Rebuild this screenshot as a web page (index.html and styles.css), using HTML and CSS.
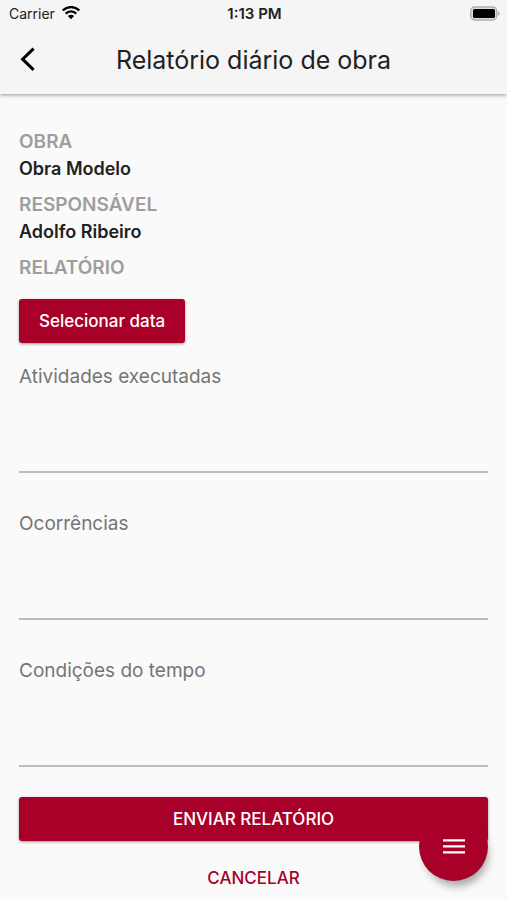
FILE: index.html
```html
<!DOCTYPE html>
<html lang="pt-BR">
<head>
<meta charset="utf-8">
<meta name="viewport" content="width=device-width, initial-scale=1">
<title>Relatório diário de obra</title>
<link rel="stylesheet" href="styles.css">
</head>
<body>
<header class="header">
  <div class="status">
    <span class="carrier">Carrier
      <svg width="18" height="14" viewBox="0 0 18 14" aria-hidden="true">
        <path d="M.8 4.5a11.6 11.6 0 0 1 16.4 0M3.7 7.6a7.5 7.5 0 0 1 10.6 0" fill="none" stroke="#000" stroke-width="2.4"/>
        <path d="M9 13.2 5.9 10.1a4.4 4.4 0 0 1 6.2 0z"/>
      </svg>
    </span>
    <span class="time">1:13 PM</span>
    <svg class="battery" width="31" height="15" viewBox="0 0 31 15" aria-hidden="true">
      <rect x="1.7" y="1" width="26" height="13" rx="4" fill="#ddd" stroke="#b0b0b0" stroke-width="1.4"/>
      <rect x="4" y="3" width="22" height="9" rx="1.6"/>
      <path d="M28.8 5.2q2 .6 2 2.3t-2 2.3z" fill="#b0b0b0"/>
    </svg>
  </div>
  <div class="appbar">
    <button class="back" type="button" aria-label="Voltar">
      <svg width="16" height="26" viewBox="0 0 16 26" aria-hidden="true">
        <path d="M13.6 1.6 2.6 12.2l11 10.6" fill="none" stroke="#000" stroke-width="3"/>
      </svg>
    </button>
    <h1 class="title">Relatório diário de obra</h1>
  </div>
</header>
<main>
  <form class="form">
    <dl class="details">
      <dt>OBRA</dt>
      <dd>Obra Modelo</dd>
      <dt>RESPONSÁVEL</dt>
      <dd>Adolfo Ribeiro</dd>
    </dl>
    <h2 class="section">RELATÓRIO</h2>
    <button class="button date" type="button">Selecionar data</button>
    <div class="field">
      <label for="atividades">Atividades executadas</label>
      <textarea id="atividades"></textarea>
    </div>
    <div class="field">
      <label for="ocorrencias">Ocorrências</label>
      <textarea id="ocorrencias"></textarea>
    </div>
    <div class="field">
      <label for="tempo">Condições do tempo</label>
      <textarea id="tempo"></textarea>
    </div>
    <button class="button" type="button">ENVIAR RELATÓRIO</button>
    <button class="cancel" type="button">CANCELAR</button>
  </form>
</main>
<button class="fab" type="button" aria-label="Menu">
  <svg width="24" height="18" viewBox="0 0 24 18" aria-hidden="true">
    <path d="M1 2.4h22M1 8.4h22M1 14.4h22" stroke="#fff" stroke-width="2.4"/>
  </svg>
</button>
</body>
</html>
```
FILE: styles.css
```css
* {
  box-sizing: border-box;
}

body {
  margin: 0;
  background: #fafafa;
  color: #212121;
  font-family: Inter, Roboto, sans-serif;
}

button {
  padding: 0;
  border: 0;
  background: none;
  font: inherit;
  cursor: pointer;
}

.header {
  background: #f5f5f5;
  box-shadow: 0 1px 4px rgba(0, 0, 0, 0.4);
}

.status {
  display: grid;
  grid-template-columns: 1fr auto 1fr;
  align-items: center;
  height: 26px;
  padding: 0 7px 0 9px;
  font-size: 14px;
}

.carrier {
  display: flex;
  align-items: center;
  gap: 7px;
}

.time {
  font-size: 15px;
  font-weight: 600;
}

.battery {
  justify-self: end;
}

.appbar {
  display: grid;
  grid-template-columns: 56px 1fr 56px;
  align-items: center;
  height: 68px;
}

.back {
  display: flex;
  align-items: center;
  justify-content: center;
  height: 56px;
}

.title {
  margin: 0;
  font-size: 25px;
  font-weight: 400;
  line-height: 32px;
  text-align: center;
}

.form {
  display: flex;
  flex-direction: column;
  padding: 34px 19px 0;
}

.details {
  margin: 0;
}

.details dt,
.section {
  margin: 0;
  color: #9e9e9e;
  font-size: 19px;
  font-weight: 600;
  line-height: 27px;
}

.details dd {
  margin: 0 0 9px;
  font-size: 18px;
  font-weight: 600;
  line-height: 27px;
}

.section {
  margin-bottom: 18px;
}

.button {
  height: 44px;
  border-radius: 3px;
  background: #a90029;
  box-shadow: 0 1px 3px rgba(0, 0, 0, 0.4);
  color: #fff;
  font-size: 17px;
  font-weight: 500;
}

.date {
  align-self: flex-start;
  margin-bottom: 20px;
  padding: 0 20px;
}

.field {
  display: flex;
  flex-direction: column;
  height: 110px;
  margin-bottom: 37px;
  border-bottom: 2px solid #bdbdbd;
}

.field:last-of-type {
  margin-bottom: 30px;
}

.field label {
  color: #757575;
  font-size: 19px;
  line-height: 28px;
}

.field textarea {
  flex: 1;
  min-height: 0;
  padding: 0;
  border: 0;
  outline: 0;
  background: none;
  font: inherit;
  resize: none;
}

.cancel {
  align-self: center;
  height: 44px;
  margin-top: 15px;
  padding: 0 20px;
  color: #a90029;
  font-size: 17px;
  font-weight: 500;
}

.fab {
  position: fixed;
  right: 19px;
  bottom: 19px;
  display: flex;
  align-items: center;
  justify-content: center;
  width: 69px;
  height: 69px;
  border-radius: 50%;
  background: #a90029;
  box-shadow: 3px 8px 8px -3px rgba(0, 0, 0, 0.35);
}
```
